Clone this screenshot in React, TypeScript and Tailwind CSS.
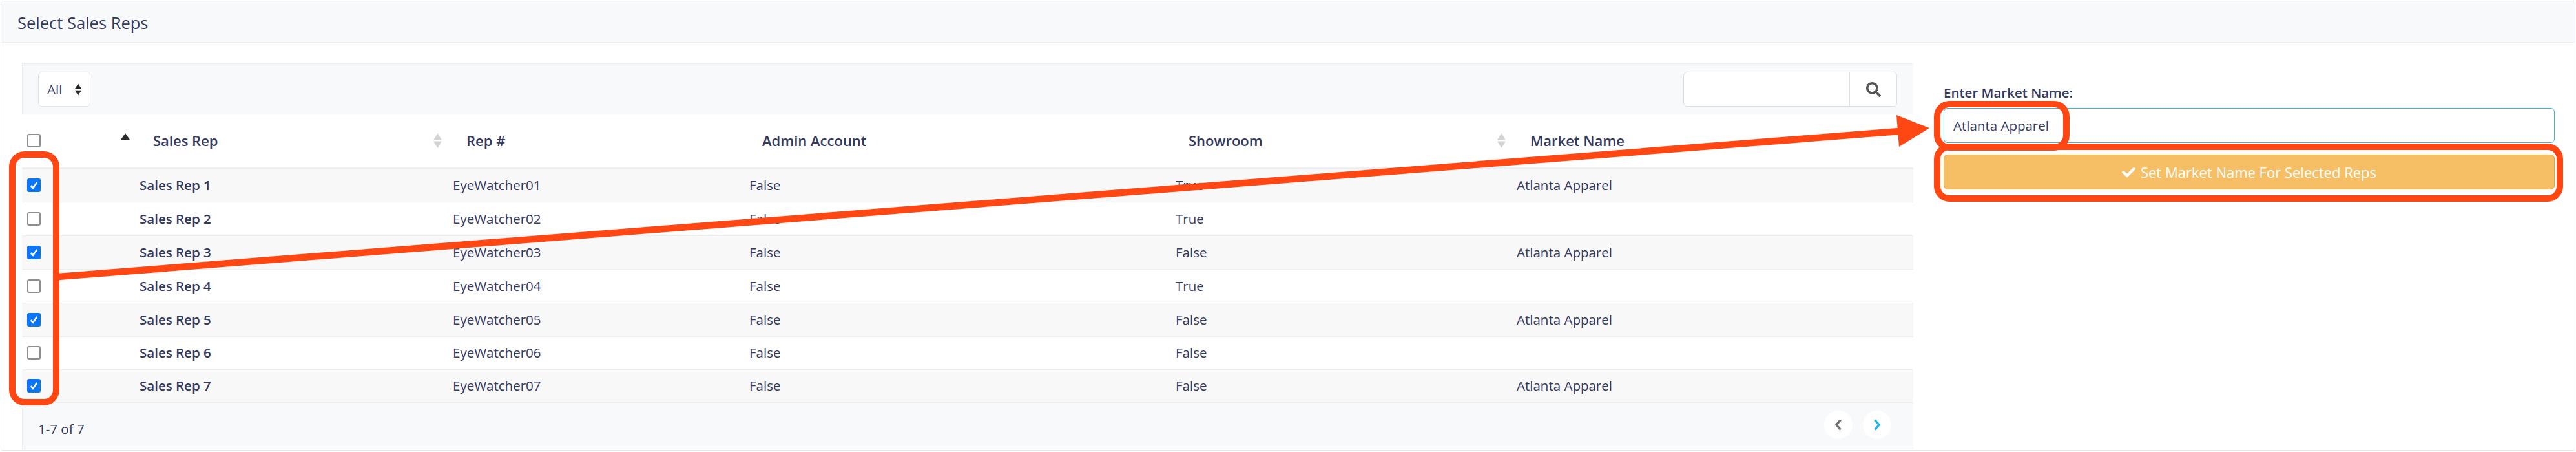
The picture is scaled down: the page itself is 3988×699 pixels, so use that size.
import { FaCheck, FaSearch } from 'react-icons/fa';

const rows = [
  { id: 1, checked: true, rep: 'EyeWatcher01', admin: 'False', showroom: 'True', market: 'Atlanta Apparel' },
  { id: 2, checked: false, rep: 'EyeWatcher02', admin: 'False', showroom: 'True', market: '' },
  { id: 3, checked: true, rep: 'EyeWatcher03', admin: 'False', showroom: 'False', market: 'Atlanta Apparel' },
  { id: 4, checked: false, rep: 'EyeWatcher04', admin: 'False', showroom: 'True', market: '' },
  { id: 5, checked: true, rep: 'EyeWatcher05', admin: 'False', showroom: 'False', market: 'Atlanta Apparel' },
  { id: 6, checked: false, rep: 'EyeWatcher06', admin: 'False', showroom: 'False', market: '' },
  { id: 7, checked: true, rep: 'EyeWatcher07', admin: 'False', showroom: 'False', market: 'Atlanta Apparel' },
];

function Check({ checked }: { checked: boolean }) {
  if (checked) {
    return (
      <span className="flex h-[21px] w-[21px] items-center justify-center rounded-[3px] bg-[#0b75f5]">
        <svg viewBox="0 0 16 16" className="h-[17px] w-[17px]">
          <path d="M3.5 8.5 L6.6 12 L12.5 3.8" fill="none" stroke="#fff" strokeWidth="2.4" />
        </svg>
      </span>
    );
  }
  return <span className="block h-[21px] w-[21px] rounded-[3px] border-2 border-[#8f8f8f] bg-white" />;
}

function SortPair() {
  return (
    <svg viewBox="0 0 13 23" className="h-[23px] w-[13px]">
      <path d="M6.5 0 L13 10.5 L0 10.5 Z" fill="#d4d4d4" />
      <path d="M0 12.5 L13 12.5 L6.5 23 Z" fill="#d4d4d4" />
    </svg>
  );
}

export default function App() {
  return (
    <div className="relative h-[699px] w-[3988px] overflow-hidden bg-white font-['Open_Sans','Noto_Sans',sans-serif] text-[20.5px] text-[#34395e]">
      <div className="m-px h-[696px] rounded-[3px] border border-[#e2e6ee]">
        <div className="flex h-[64px] items-center border-b border-[#ebeef3] bg-[#f8f9fb] pl-[25px] pt-[4px] text-[25.5px] leading-none">
          Select Sales Reps
        </div>
        <div className="flex pl-[32px] pt-[32px]">
          <div className="w-[2928px]">
            <div className="flex h-[79px] items-center justify-between border-l border-r border-t border-[#eceff3] bg-[#f8f9fb] pl-[24px] pr-[24px]">
              <div className="flex h-[54px] w-[81px] items-center justify-between rounded-[6px] border border-[#e0e5ec] bg-white pl-[13px] pr-[13px]">
                <span>All</span>
                <svg viewBox="0 0 10 18" className="h-[19px] w-[10px]">
                  <path d="M5 0 L10 7.8 L0 7.8 Z M0 10.2 L10 10.2 L5 18 Z" fill="#222" />
                </svg>
              </div>
              <div className="flex h-[54px] w-[331px] rounded-[6px] border border-[#d9e0e9] bg-white">
                <div className="w-[257px] border-r border-[#d9e0e9]" />
                <div className="flex flex-1 items-center justify-center">
                  <FaSearch className="h-[23px] w-[23px] text-[#555]" />
                </div>
              </div>
            </div>
            <table className="w-full table-fixed border-collapse">
              <colgroup>
                <col className="w-[182px]" />
                <col className="w-[485px]" />
                <col className="w-[459px]" />
                <col className="w-[660px]" />
                <col className="w-[528px]" />
                <col />
              </colgroup>
              <thead>
                <tr className="h-[83px] border-b-[3px] border-[#eeeef3] text-left text-[22px]">
                  <th className="relative pl-[8px] font-normal">
                    <Check checked={false} />
                    <svg viewBox="0 0 14 10" className="absolute left-[153px] top-[29px] h-[10px] w-[14px]">
                      <path d="M7 0 L14 10 L0 10 Z" fill="#2b2b2b" />
                    </svg>
                  </th>
                  <th className="relative pl-[21px] font-semibold">
                    Sales Rep
                    <span className="absolute right-[17px] top-[29px] flex">
                      <SortPair />
                    </span>
                  </th>
                  <th className="pl-[21px] font-semibold">Rep #</th>
                  <th className="pl-[20px] font-semibold">Admin Account</th>
                  <th className="relative pl-[20px] font-semibold">
                    Showroom
                    <span className="absolute right-[17px] top-[29px] flex">
                      <SortPair />
                    </span>
                  </th>
                  <th className="pl-[21px] font-semibold">Market Name</th>
                </tr>
              </thead>
              <tbody>
                {rows.map((row) => (
                  <tr
                    key={row.id}
                    className={`border-b border-[#edeef2] ${row.id > 5 ? 'h-[51px]' : 'h-[52px]'} ${row.id % 2 ? 'bg-[#f8f8f9]' : 'bg-white'}`}
                  >
                    <td className="pl-[8px]">
                      <Check checked={row.checked} />
                    </td>
                    <td className="font-semibold">Sales Rep {row.id}</td>
                    <td>{row.rep}</td>
                    <td>{row.admin}</td>
                    <td>{row.showroom}</td>
                    <td>{row.market}</td>
                  </tr>
                ))}
              </tbody>
            </table>
            <div className="flex h-[72px] items-center justify-between border-b border-l border-r border-[#eceff3] bg-[#f8f9fb] pl-[24px] pr-[33px]">
              <span className="pt-[10px]">1-7 of 7</span>
              <div className="flex gap-[16px] pb-[2px]">
                <span className="flex h-[44px] w-[44px] items-center justify-center rounded-full bg-white">
                  <svg viewBox="0 0 12 18" className="h-[18px] w-[12px]">
                    <path d="M9.5 1.5 L3 9 L9.5 16.5" fill="none" stroke="#6f6f6f" strokeWidth="3.4" />
                  </svg>
                </span>
                <span className="flex h-[44px] w-[44px] items-center justify-center rounded-full bg-white">
                  <svg viewBox="0 0 12 18" className="h-[18px] w-[12px]">
                    <path d="M2.5 1.5 L9 9 L2.5 16.5" fill="none" stroke="#22b5e0" strokeWidth="3.4" />
                  </svg>
                </span>
              </div>
            </div>
          </div>
          <div className="ml-[47px] w-[946px] pt-[32px]">
            <label className="block font-semibold leading-[27px]">Enter Market Name:</label>
            <div className="mt-[10px] flex h-[54px] items-center rounded-[6px] border border-[#3bb5d0] bg-white pl-[14px]">
              Atlanta Apparel
            </div>
            <button className="mt-[18px] flex h-[54px] w-full items-center justify-center gap-[8px] rounded-[6px] border border-[#e9a22b] bg-[#f7bf65] text-[22px] text-white">
              <FaCheck className="h-[21px] w-[21px]" />
              Set Market Name For Selected Reps
            </button>
          </div>
        </div>
      </div>

      {/* annotation overlays */}
      <span className="absolute left-[14px] top-[234px] h-[393px] w-[78px] rounded-[24px] border-[10px] border-[#ff4713]" />
      <span className="absolute left-[2994px] top-[156px] h-[77px] w-[210px] rounded-[24px] border-[10px] border-[#ff4713]" />
      <span className="absolute left-[2994px] top-[222px] h-[90px] w-[974px] rounded-[24px] border-[10px] border-[#ff4713]" />
      <svg viewBox="0 0 3988 699" className="pointer-events-none absolute left-0 top-0 h-[699px] w-[3988px]">
        <path d="M90 428 L2940 203" stroke="#ff4713" strokeWidth="10.5" fill="none" />
        <path d="M2936 178 L2987 198 L2940 227 Z" fill="#ff4713" />
      </svg>
    </div>
  );
}
